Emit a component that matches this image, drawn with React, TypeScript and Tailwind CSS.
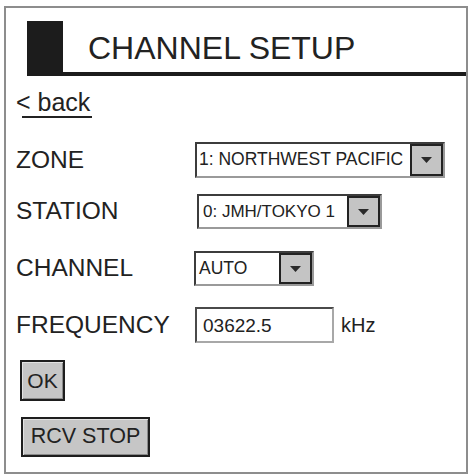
import React from "react";

const Arrow = () => (
  <div className="w-[33px] h-full border-2 border-[#222] bg-[#c4c4c4] flex items-center justify-center">
    <svg width="11" height="6" viewBox="0 0 11 6">
      <polygon points="0,0 11,0 5.5,6" fill="#2a2a2a" />
    </svg>
  </div>
);

const Select = ({ value, className, textClass }: { value: string; className: string; textClass: string }) => (
  <div
    className={
      "h-full flex border-2 border-t-[#3c3c3c] border-l-[#3c3c3c] border-r-[#9a9a9a] border-b-[#9a9a9a] bg-white " +
      className
    }
  >
    <div className={"flex-1 flex items-center leading-none text-[#222] " + textClass}>{value}</div>
    <Arrow />
  </div>
);

const Label = ({ children }: { children: React.ReactNode }) => (
  <div className="w-[179px] text-[24.5px] leading-none text-[#222]">{children}</div>
);

const App = () => {
  return (
    <div className="w-[470px] h-[476px] bg-white pt-[6px] pl-[4px] font-['Liberation_Sans',Arial,sans-serif]">
      <div className="w-[464px] h-[468px] border-2 border-[#8d8d8d] flex flex-col">
        <div className="mt-[13px] pl-[21px] flex items-end">
          <div className="w-[36px] h-[55px] bg-[#1c1c1c]" />
          <div className="flex-1 border-b-4 border-[#1c1c1c] pl-[25px] pb-[8px] text-[32px] leading-none text-[#222]">
            CHANNEL SETUP
          </div>
        </div>

        <div className="pl-[10px] flex flex-col">
          <div className="mt-[14px] inline-flex flex-col self-start">
            <span className="text-[25px] leading-none text-[#222]">&lt; back</span>
            <div className="mt-[1px] ml-[6px] w-[70px] h-[2px] bg-[#222]" />
          </div>

          <div className="mt-[24px] h-[36px] flex items-center">
            <Label>ZONE</Label>
            <Select value="1: NORTHWEST PACIFIC" className="w-[250px]" textClass="pl-[2px] text-[17.5px]" />
          </div>

          <div className="mt-[16px] h-[35px] flex items-center">
            <Label>STATION</Label>
            <Select value="0: JMH/TOKYO 1" className="ml-[2px] w-[185px]" textClass="pl-[4px] text-[17px]" />
          </div>

          <div className="mt-[22px] h-[35px] flex items-center">
            <Label>CHANNEL</Label>
            <Select value="AUTO" className="-ml-[1px] w-[120px]" textClass="pl-[3px] text-[17.5px]" />
          </div>

          <div className="mt-[21px] h-[36px] flex items-center">
            <Label>FREQUENCY</Label>
            <div className="w-[139px] h-full border-2 border-t-[#4a4a4a] border-l-[#4a4a4a] border-r-[#a8a8a8] border-b-[#a8a8a8] bg-white flex items-center pl-[6px] text-[19px] leading-none text-[#222]">
              03622.5
            </div>
            <span className="ml-[7px] text-[20px] leading-none text-[#222]">kHz</span>
          </div>

          <button className="mt-[17px] ml-[4px] w-[45px] h-[41px] border-2 border-[#1e1e1e] bg-[#c6c6c6] shadow-[inset_1px_1px_0_#e2e2e2,inset_-1px_-1px_0_#8a8a8a] flex items-center justify-center text-[21px] leading-none text-[#222]">
            OK
          </button>

          <button className="mt-[16px] ml-[5px] w-[129px] h-[40px] border-2 border-[#1e1e1e] bg-[#c6c6c6] shadow-[inset_1px_1px_0_#e2e2e2,inset_-1px_-1px_0_#8a8a8a] flex items-center justify-center text-[21.5px] leading-none text-[#222]">
            RCV STOP
          </button>
        </div>
      </div>
    </div>
  );
};

export default App;
